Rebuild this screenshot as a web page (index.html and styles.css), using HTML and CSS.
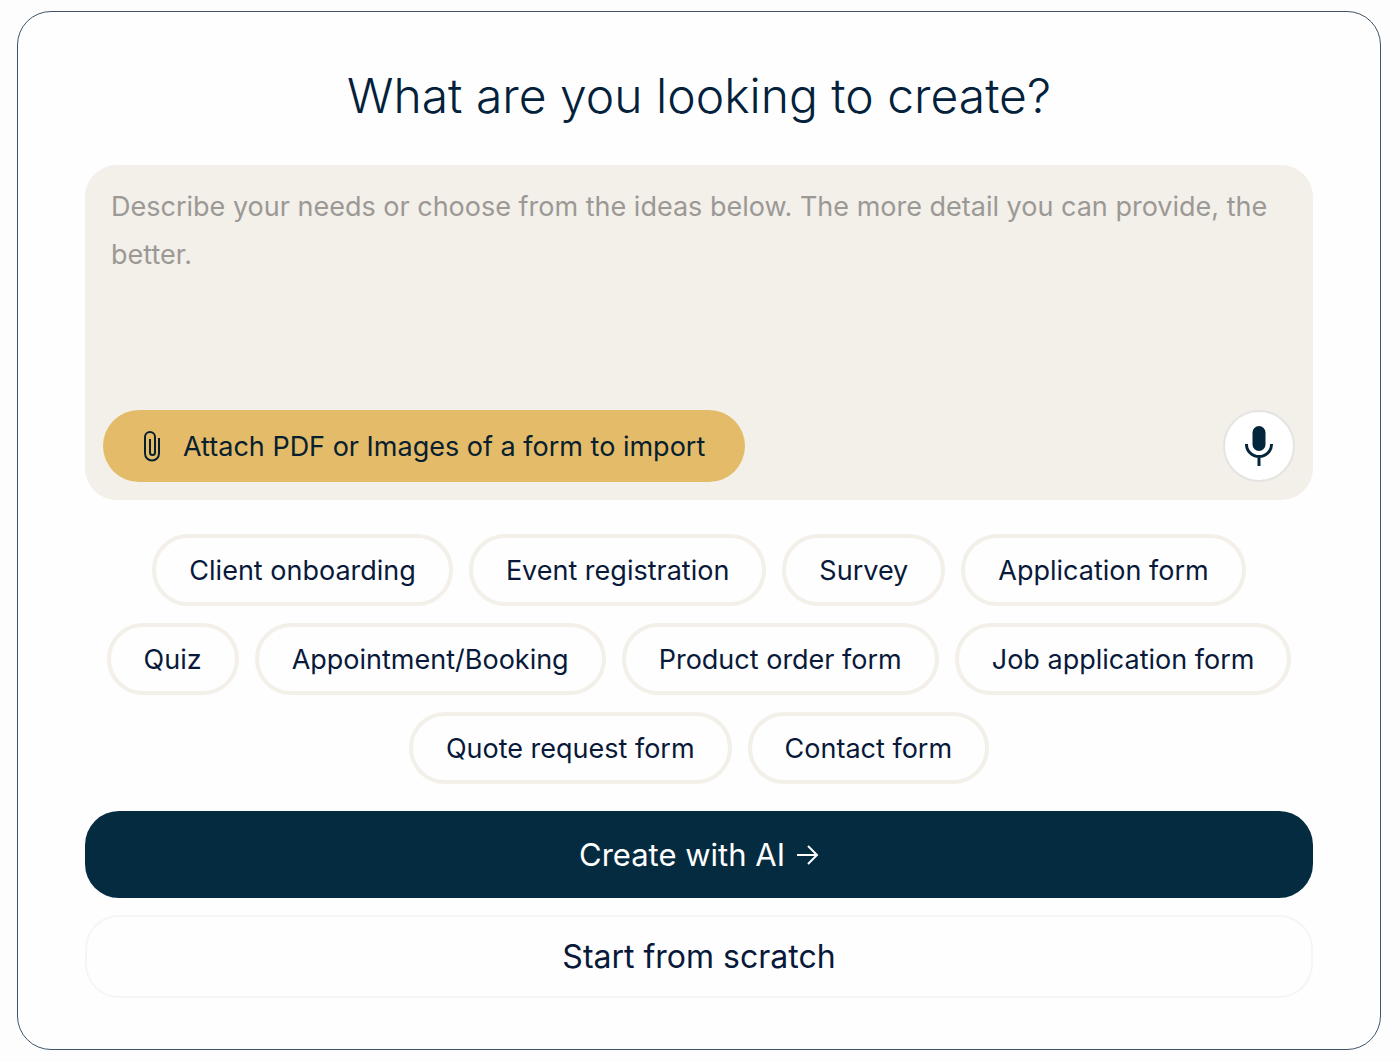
FILE: index.html
```html
<!DOCTYPE html>
<html lang="en">
<head>
<meta charset="utf-8">
<meta name="viewport" content="width=device-width, initial-scale=1">
<title>Create a form</title>
<link rel="stylesheet" href="styles.css">
</head>
<body>
<main class="card">
  <h1 class="title"><label for="prompt">What are you looking to create?</label></h1>
  <div class="prompt">
    <textarea class="prompt-input" id="prompt" placeholder="Describe your needs or choose from the ideas below. The more detail you can provide, the better."></textarea>
    <div class="prompt-tools">
      <button class="attach" type="button">
        <svg class="clip" viewBox="0 0 18 32" aria-hidden="true"><path d="M16 8v15.500a7 7 0 0 1-14 0V7a5 5 0 0 1 10 0v15.500a2.500 2.500 0 0 1-5 0V9"/></svg>
        <span>Attach PDF or Images of a form to import</span>
      </button>
      <button class="mic" type="button" aria-label="Dictate">
        <svg class="mic-icon" viewBox="0 0 28 40" aria-hidden="true"><rect class="mic-body" x="7.500" y="0" width="13" height="25" rx="6.500"/><path class="mic-stand" d="M1.500 18v.5a12.500 12 0 0 0 25 0V18M14 31v9"/></svg>
      </button>
    </div>
  </div>
  <div class="ideas">
    <div class="idea-row">
      <button class="chip" type="button">Client onboarding</button>
      <button class="chip" type="button">Event registration</button>
      <button class="chip" type="button">Survey</button>
      <button class="chip" type="button">Application form</button>
    </div>
    <div class="idea-row">
      <button class="chip" type="button">Quiz</button>
      <button class="chip" type="button">Appointment/Booking</button>
      <button class="chip" type="button">Product order form</button>
      <button class="chip" type="button">Job application form</button>
    </div>
    <div class="idea-row">
      <button class="chip" type="button">Quote request form</button>
      <button class="chip" type="button">Contact form</button>
    </div>
  </div>
  <div class="actions">
    <button class="action primary" type="button">
      <span>Create with AI</span>
      <svg class="arrow" viewBox="0 0 22 22" aria-hidden="true"><path d="M0 11h20M11 2l9 9-9 9"/></svg>
    </button>
    <button class="action secondary" type="button">Start from scratch</button>
  </div>
</main>
</body>
</html>
```
FILE: styles.css
```css
* {
  box-sizing: border-box;
}

body {
  margin: 0;
  padding: 11px 19px 12px 17px;
  background: #fdfdfd;
  color: #08193a;
  font-family: Inter, "Liberation Sans", sans-serif;
}

button,
textarea {
  font: inherit;
  color: inherit;
}

button {
  cursor: pointer;
}

.card {
  padding: 52px 67px 51px;
  border: 1px solid #3d5468;
  border-radius: 34px;
  background: #fefefe;
}

.title {
  margin: 0 0 37px;
  color: #03213a;
  font-size: 48px;
  font-weight: 300;
  line-height: 64px;
  text-align: center;
}

.prompt {
  padding: 18px;
  border-radius: 32px;
  background: #f3efe9;
}

.prompt-input {
  display: block;
  width: 100%;
  height: 227px;
  padding: 0 8px;
  border: 0;
  outline: 0;
  background: transparent;
  resize: none;
  font-size: 27px;
  line-height: 48px;
}

.prompt-input::placeholder {
  color: #9b9996;
  opacity: 1;
}

.prompt-tools {
  display: flex;
  align-items: center;
  justify-content: space-between;
}

.attach {
  display: flex;
  align-items: center;
  gap: 22px;
  height: 72px;
  padding: 0 40px;
  border: 0;
  border-radius: 36px;
  background: #e4bb69;
  color: #07202f;
  font-size: 27px;
}

.clip {
  width: 18px;
  height: 32px;
  fill: none;
  stroke: currentColor;
  stroke-width: 2;
}

.mic {
  display: grid;
  place-items: center;
  width: 72px;
  height: 72px;
  padding: 0;
  border: 2px solid #e5e4e3;
  border-radius: 50%;
  background: #ffffff;
  color: #03263c;
}

.mic-icon {
  width: 28px;
  height: 40px;
}

.mic-body {
  fill: currentColor;
}

.mic-stand {
  fill: none;
  stroke: currentColor;
  stroke-width: 3;
}

.ideas {
  display: grid;
  gap: 17px;
  margin: 34px 0 27px;
}

.idea-row {
  display: flex;
  flex-wrap: wrap;
  justify-content: center;
  gap: 16px;
}

.chip {
  height: 72px;
  padding: 0 33px;
  border: 4px solid #f3efe9;
  border-radius: 36px;
  background: #fefefe;
  font-size: 27px;
}

.actions {
  display: grid;
  gap: 17px;
}

.action {
  display: flex;
  align-items: center;
  justify-content: center;
  gap: 12px;
  border-radius: 34px;
  font-size: 32px;
}

.primary {
  height: 87px;
  border: 0;
  background: #042b40;
  color: #ffffff;
  font-size: 31px;
}

.secondary {
  height: 83px;
  border: 2px solid #f6f5f2;
  background: #fefefe;
}

.arrow {
  width: 22px;
  height: 22px;
  fill: none;
  stroke: currentColor;
  stroke-width: 2;
}
```
